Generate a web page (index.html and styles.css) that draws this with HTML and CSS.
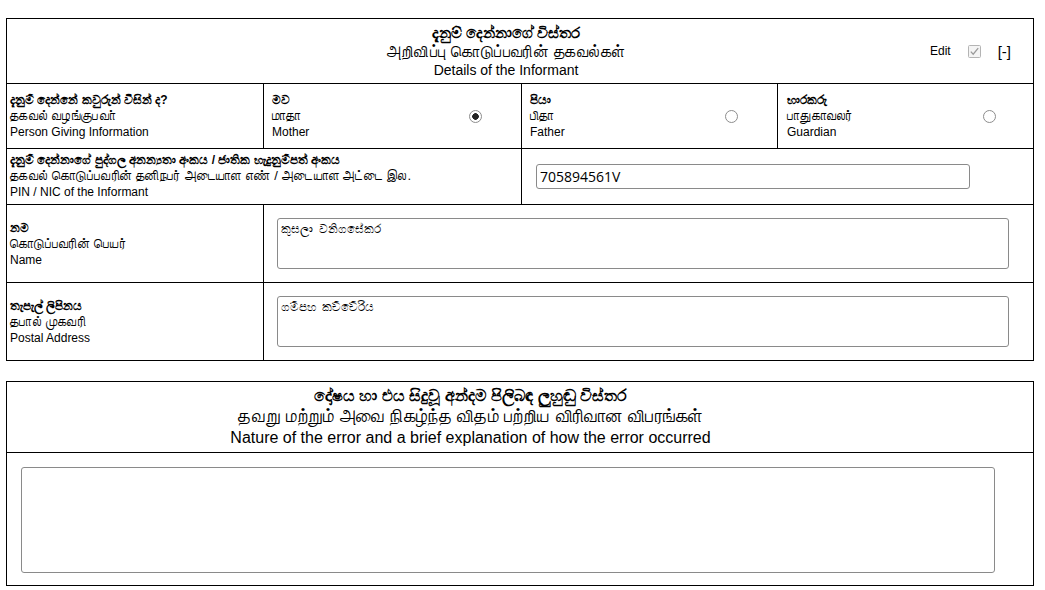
FILE: index.html
```html
<!DOCTYPE html>
<html lang="si">
<head>
<meta charset="utf-8">
<title>Details of the Informant</title>
<link rel="stylesheet" href="styles.css">
</head>
<body>
<div class="page">
  <section class="panel informant">
    <div class="panel-head">
      <div class="head-title">
        <div class="t-si">දැනුම් දෙන්නාගේ විස්තර</div>
        <div class="t-ta">அறிவிப்பு கொடுப்பவரின் தகவல்கள்</div>
        <div class="t-en">Details of the Informant</div>
      </div>
      <div class="head-tools">
        <span class="edit-label">Edit</span>
        <span class="edit-box" role="checkbox" aria-checked="true" aria-disabled="true">
          <svg width="13" height="13" viewBox="0 0 13 13"><rect x="0.5" y="0.5" width="12" height="12" rx="1" fill="#f4f4f4" stroke="#b4b4b4"/><path d="M2.8 6.6 L5.2 9.2 L10.2 3.2" fill="none" stroke="#9a9a9a" stroke-width="1.3"/></svg>
        </span>
        <span class="collapse">[-]</span>
      </div>
    </div>

    <div class="row choice-row">
      <div class="cell first">
        <div class="lbl">
          <div class="l-si">දැනුම් දෙන්නේ කවුරුන් විසින් ද?</div>
          <div class="l-ta">தகவல் வழங்குபவா்</div>
          <div class="l-en">Person Giving Information</div>
        </div>
      </div>
      <div class="cell opt">
        <div class="lbl">
          <div class="l-si">මව</div>
          <div class="l-ta">மாதா</div>
          <div class="l-en">Mother</div>
        </div>
        <input type="radio" name="informant" class="radio" checked>
      </div>
      <div class="cell opt">
        <div class="lbl">
          <div class="l-si">පියා</div>
          <div class="l-ta">பிதா</div>
          <div class="l-en">Father</div>
        </div>
        <input type="radio" name="informant" class="radio">
      </div>
      <div class="cell opt">
        <div class="lbl">
          <div class="l-si">භාරකරු</div>
          <div class="l-ta">பாதுகாவலர்</div>
          <div class="l-en">Guardian</div>
        </div>
        <input type="radio" name="informant" class="radio">
      </div>
    </div>

    <div class="row pin-row">
      <div class="cell first">
        <div class="lbl">
          <div class="l-si">දැනුම් දෙන්නාගේ පුද්ගල අනන්‍යතා අංකය / ජාතික හැදුනුම්පත් අංකය</div>
          <div class="l-ta">தகவல் கொடுப்பவரின் தனிநபர் அடையாள எண் / அடையாள அட்டை இல.</div>
          <div class="l-en">PIN / NIC of the Informant</div>
        </div>
      </div>
      <div class="cell field">
        <input type="text" class="pin-input" value="705894561V">
      </div>
    </div>

    <div class="row text-row">
      <div class="cell first mid">
        <div class="lbl">
          <div class="l-si">නම</div>
          <div class="l-ta">கொடுப்பவரின் பெயர்</div>
          <div class="l-en">Name</div>
        </div>
      </div>
      <div class="cell field">
        <textarea class="small-area">කුසලා  වනිගසේකර</textarea>
      </div>
    </div>

    <div class="row text-row">
      <div class="cell first mid">
        <div class="lbl">
          <div class="l-si">තැපැල් ලිපිනය</div>
          <div class="l-ta">தபால் முகவரி</div>
          <div class="l-en">Postal Address</div>
        </div>
      </div>
      <div class="cell field">
        <textarea class="small-area">ගම්පහ  කච්චේරිය</textarea>
      </div>
    </div>
  </section>

  <section class="panel error">
    <div class="error-head">
      <div class="e-si">දෝෂය හා එය සිදුවූ අන්දම පිලිබඳ ලුහුඬු විස්තර</div>
      <div class="e-ta">தவறு மற்றும் அவை நிகழ்ந்த விதம் பற்றிய விரிவான விபரங்கள்</div>
      <div class="e-en">Nature of the error and a brief explanation of how the error occurred</div>
    </div>
    <div class="error-body">
      <textarea class="big-area"></textarea>
    </div>
  </section>
</div>
</body>
</html>
```

FILE: styles.css
```css
* { box-sizing: border-box; }

html, body {
  margin: 0;
  padding: 0;
  background: #fff;
  color: #000;
  font-family: "Liberation Sans", Arial, sans-serif;
}

.page {
  padding: 18px 0 0 6px;
}

.panel {
  width: 1028px;
  border: 1px solid #000;
}

.panel.error {
  margin-top: 20px;
}

/* ---------- informant header ---------- */
.panel-head {
  display: grid;
  grid-template-columns: 1fr;
  height: 65px;
  border-bottom: 1px solid #000;
}

.head-title,
.head-tools {
  grid-area: 1 / 1;
}

.head-title {
  text-align: center;
  padding: 4px 28px 0 0;
}

.t-si {
  font-size: 15px;
  font-weight: bold;
  line-height: 19px;
}

.t-ta {
  font-size: 16px;
  letter-spacing: 0.4px;
  line-height: 19px;
}

.t-en {
  font-size: 14px;
  line-height: 19px;
}

.head-tools {
  justify-self: end;
  align-self: center;
  display: flex;
  align-items: center;
  padding-right: 22px;
}

.edit-label {
  font-size: 12px;
}

.edit-box {
  display: flex;
  margin-left: 17px;
}

.collapse {
  font-size: 15px;
  margin-left: 17px;
}

/* ---------- rows ---------- */
.row {
  display: grid;
  border-bottom: 1px solid #000;
}

.row:last-child {
  border-bottom: none;
}

.choice-row {
  grid-template-columns: 256px 258px 256px 256px;
  height: 65px;
}

.pin-row {
  grid-template-columns: 514px 512px;
  height: 56px;
}

.text-row {
  grid-template-columns: 256px 770px;
  height: 78px;
}

.row:last-child.text-row {
  height: 77px;
}

.cell {
  display: flex;
  align-items: center;
}

.cell + .cell {
  border-left: 1px solid #000;
}

.cell.first {
  padding-left: 3px;
}

.pin-row .cell.first {
  align-items: flex-start;
  padding-top: 3px;
}

.cell.opt {
  justify-content: space-between;
  padding: 0 39px 0 8px;
}

.cell.opt:last-child {
  padding-left: 9px;
  padding-right: 37px;
}

.lbl {
  line-height: 16px;
  white-space: nowrap;
}

.l-si {
  font-size: 12px;
  font-weight: bold;
}

.l-ta {
  font-size: 13px;
  letter-spacing: 0.3px;
}

.l-en {
  font-size: 12px;
}

.radio {
  appearance: none;
  -webkit-appearance: none;
  width: 13px;
  height: 13px;
  margin: 0;
  border: 1px solid #8d8d8d;
  border-radius: 50%;
  background: #fff;
}

.radio:checked {
  background: radial-gradient(circle, #222 0 3px, #fff 3.6px);
}

.cell.field {
  padding-left: 14px;
}

.text-row .cell.field {
  padding-left: 13px;
}

.pin-input {
  width: 434px;
  height: 25px;
  margin: 0;
  padding: 1px 3px;
  border: 1px solid #8a8a8a;
  border-radius: 3px;
  font-family: "Open Sans", "DejaVu Sans", sans-serif;
  font-size: 14px;
  color: #000;
  background: #fff;
}

.small-area {
  width: 732px;
  height: 51px;
  margin: 0;
  padding: 4px 3px;
  border: 1px solid #8a8a8a;
  border-radius: 3px;
  font-family: "Liberation Sans", Arial, sans-serif;
  font-size: 11.5px;
  color: #000;
  resize: none;
}

/* ---------- error panel ---------- */
.error-head {
  height: 71px;
  border-bottom: 1px solid #000;
  text-align: center;
  padding: 4px 99px 0 0;
}

.e-si {
  font-size: 16px;
  font-weight: bold;
  line-height: 20px;
}

.e-ta {
  font-size: 17.5px;
  letter-spacing: 0.3px;
  line-height: 21px;
}

.e-en {
  font-size: 16px;
  line-height: 22px;
}

.error-body {
  height: 132px;
  padding: 14px 0 0 14px;
}

.big-area {
  display: block;
  width: 974px;
  height: 106px;
  margin: 0;
  border: 1px solid #8a8a8a;
  border-radius: 3px;
  resize: none;
  font-family: "Liberation Sans", Arial, sans-serif;
}
```
